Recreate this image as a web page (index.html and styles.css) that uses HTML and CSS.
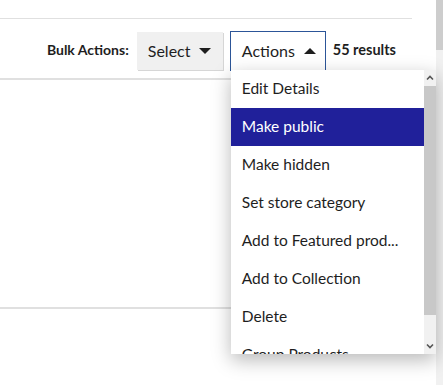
FILE: index.html
```html
<!DOCTYPE html>
<html lang="en">
<head>
<meta charset="UTF-8" />
<meta name="viewport" content="width=device-width, initial-scale=1" />
<title>Products</title>
<link rel="stylesheet" href="styles.css">
</head>
<body>

<div class="page">
  <div class="content">
    <hr class="rule rule-top">

    <div class="toolbar">
      <span class="label">Bulk Actions:</span>
      <button class="btn btn-select">Select <span class="caret down"></span></button>
      <div class="actions-wrap">
        <button class="btn btn-actions">Actions <span class="caret up"></span></button>
        <div class="menu">
          <ul class="menu-list">
            <li>Edit Details</li>
            <li class="active">Make public</li>
            <li>Make hidden</li>
            <li>Set store category</li>
            <li>Add to Featured prod...</li>
            <li>Add to Collection</li>
            <li>Delete</li>
            <li>Group Products</li>
          </ul>
          <div class="menu-scroll">
            <svg class="arrow" width="12" height="12" viewBox="0 0 12 12"><path d="M3 7.5 L6 4.5 L9 7.5" fill="none" stroke="#555" stroke-width="1.6"/></svg>
            <div class="menu-track"><div class="menu-thumb"></div></div>
            <svg class="arrow" width="12" height="12" viewBox="0 0 12 12"><path d="M3 4.5 L6 7.5 L9 4.5" fill="none" stroke="#555" stroke-width="1.6"/></svg>
          </div>
        </div>
      </div>
      <span class="count">55 results</span>
    </div>

    <hr class="rule rule-mid">
    <hr class="rule rule-bottom">
  </div>
</div>

<div class="page-scroll"><div class="page-thumb"></div></div>

</body>
</html>
```

FILE: styles.css
```css
body {
  margin: 0;
  height: 385px;
  overflow: hidden;
  display: flex;
  background: #fff;
  font-family: Lato, "Open Sans", sans-serif;
  color: #1e1e1e;
}
.page {
  flex: 1;
}
.content {
  padding-right: 24px;
}
.rule {
  margin: 0;
  border: none;
  border-top: 1px solid #e0e0e0;
}
.rule-top {
  margin-top: 18px;
}
.rule-mid {
  border-top-width: 2px;
}
.rule-bottom {
  margin-top: 227px;
  border-top-width: 2px;
}
.toolbar {
  display: flex;
  justify-content: flex-end;
  align-items: flex-start;
  height: 59px;
  padding-top: 12px;
  box-sizing: border-box;
  padding-right: 16px;
}
.label,
.count {
  font-weight: 700;
  font-size: 14px;
  line-height: 38px;
}
.label {
  margin-right: 8px;
}
.count {
  margin-left: 7px;
  font-size: 14.5px;
}
.btn {
  font-family: inherit;
  font-size: 16px;
  color: #1e1e1e;
  display: flex;
  align-items: center;
  gap: 9px;
  cursor: pointer;
  box-sizing: border-box;
}
.btn-select {
  margin-top: 1px;
  width: 86px;
  height: 38px;
  padding: 0 0 1px 11px;
  background: #f0f0f0;
  border: none;
  box-shadow: 1px 1px 0 #d6d6d6;
  margin-right: 7px;
}
.actions-wrap {
  position: relative;
}
.btn-actions {
  width: 96px;
  height: 40px;
  padding: 0 0 2px 11px;
  background: #fff;
  border: 1px solid #2c5598;
  border-bottom: none;
}
.caret {
  width: 0;
  height: 0;
  border-left: 6px solid transparent;
  border-right: 6px solid transparent;
}
.caret.down {
  border-top: 6px solid #1e1e1e;
}
.caret.up {
  border-bottom: 6px solid #1e1e1e;
}
.menu {
  position: absolute;
  top: 39px;
  left: 1px;
  width: 205px;
  height: 284px;
  display: flex;
  background: #fff;
  box-shadow: 0 6px 18px rgba(0, 0, 0, 0.28);
  overflow: hidden;
  z-index: 2;
}
.menu-list {
  flex: 1;
  list-style: none;
  margin: 0;
  padding: 0;
}
.menu-list li {
  height: 38px;
  line-height: 36px;
  padding-left: 11px;
  font-size: 15.5px;
  white-space: nowrap;
}
.menu-list li.active {
  background: #20209a;
  color: #fff;
}
.menu-scroll {
  width: 12px;
  display: flex;
  flex-direction: column;
  background: #f1f1f1;
}
.arrow {
  display: block;
  margin: 2px 0;
}
.menu-track {
  flex: 1;
}
.menu-thumb {
  height: 229px;
  background: #c8c8c8;
}
.page-scroll {
  width: 7px;
  background: #f1f1f1;
}
.page-thumb {
  height: 50px;
  background: #cdcdcd;
}
```
